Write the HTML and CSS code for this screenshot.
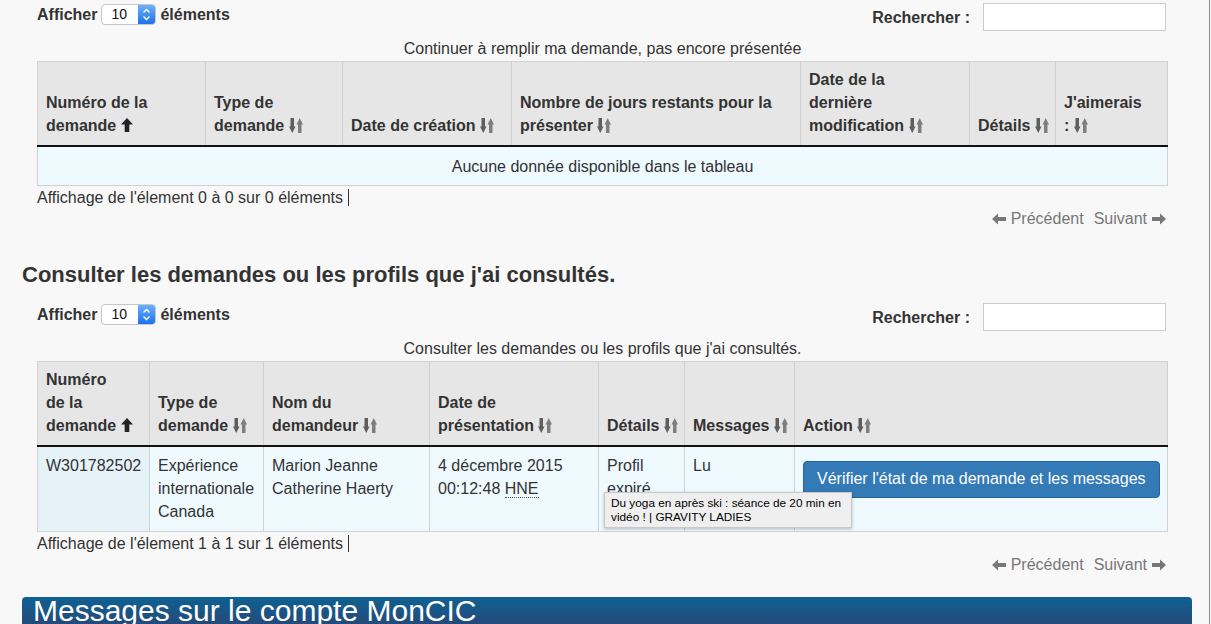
FILE: index.html
```html
<!DOCTYPE html>
<html lang="fr">
<head>
<meta charset="utf-8">
<title>Mes demandes</title>
<link rel="stylesheet" href="styles.css">
</head>
<body>
<div class="page">
  <div class="container">

    <div class="dt">
      <div class="dt-top">
        <div class="dt-length">Afficher
          <span class="select"><span class="select-val">10</span><span class="select-btn"><svg width="17" height="19" viewBox="0 0 17 19"><path d="M5.5 7.5L8.5 4.5L11.5 7.5M5.5 11.5L8.5 14.5L11.5 11.5" fill="none" stroke="#fff" stroke-width="1.4"/></svg></span></span>
          éléments</div>
        <div class="dt-filter">Rechercher : <span class="search"></span></div>
      </div>
      <table>
        <caption>Continuer à remplir ma demande, pas encore présentée</caption>
        <colgroup><col class="w168"><col class="w137"><col class="w169"><col class="w289"><col class="w169"><col class="w86"><col class="w112"></colgroup>
        <thead>
          <tr>
            <th>Numéro de la<br>demande <svg class="ico-up" width="12" height="14" viewBox="0 0 12 14"><path d="M6 0L12 6.5H8.3V14H3.7V6.5H0Z"/></svg></th>
            <th>Type de<br>demande <svg class="ico-sort" width="14" height="15" viewBox="0 0 14 15"><path class="d" d="M1.5 0H5V8.5H6.5L3.25 15L0 8.5H1.5Z"/><path class="u" d="M10.75 0L14 6.5H12.5V15H9V6.5H7.5Z"/></svg></th>
            <th>Date de création <svg class="ico-sort" width="14" height="15" viewBox="0 0 14 15"><path class="d" d="M1.5 0H5V8.5H6.5L3.25 15L0 8.5H1.5Z"/><path class="u" d="M10.75 0L14 6.5H12.5V15H9V6.5H7.5Z"/></svg></th>
            <th>Nombre de jours restants pour la<br>présenter <svg class="ico-sort" width="14" height="15" viewBox="0 0 14 15"><path class="d" d="M1.5 0H5V8.5H6.5L3.25 15L0 8.5H1.5Z"/><path class="u" d="M10.75 0L14 6.5H12.5V15H9V6.5H7.5Z"/></svg></th>
            <th>Date de la<br>dernière<br>modification <svg class="ico-sort" width="14" height="15" viewBox="0 0 14 15"><path class="d" d="M1.5 0H5V8.5H6.5L3.25 15L0 8.5H1.5Z"/><path class="u" d="M10.75 0L14 6.5H12.5V15H9V6.5H7.5Z"/></svg></th>
            <th>Détails <svg class="ico-sort" width="14" height="15" viewBox="0 0 14 15"><path class="d" d="M1.5 0H5V8.5H6.5L3.25 15L0 8.5H1.5Z"/><path class="u" d="M10.75 0L14 6.5H12.5V15H9V6.5H7.5Z"/></svg></th>
            <th>J'aimerais<br>: <svg class="ico-sort" width="14" height="15" viewBox="0 0 14 15"><path class="d" d="M1.5 0H5V8.5H6.5L3.25 15L0 8.5H1.5Z"/><path class="u" d="M10.75 0L14 6.5H12.5V15H9V6.5H7.5Z"/></svg></th>
          </tr>
        </thead>
        <tbody>
          <tr><td class="empty" colspan="7">Aucune donnée disponible dans le tableau</td></tr>
        </tbody>
      </table>
      <div class="info">Affichage de l'élement 0 à 0 sur 0 éléments <span class="bar"></span></div>
      <div class="pager">
        <span class="pg"><svg class="ico-arrow" width="14" height="12" viewBox="0 0 14 12"><path d="M0 6L6 0.5V4H14V8H6V11.5Z"/></svg>Précédent</span>
        <span class="pg">Suivant<svg class="ico-arrow" width="14" height="12" viewBox="0 0 14 12"><path d="M14 6L8 0.5V4H0V8H8V11.5Z"/></svg></span>
      </div>
    </div>

    <h2 class="section-title">Consulter les demandes ou les profils que j'ai consultés.</h2>

    <div class="dt">
      <div class="dt-top">
        <div class="dt-length">Afficher
          <span class="select"><span class="select-val">10</span><span class="select-btn"><svg width="17" height="19" viewBox="0 0 17 19"><path d="M5.5 7.5L8.5 4.5L11.5 7.5M5.5 11.5L8.5 14.5L11.5 11.5" fill="none" stroke="#fff" stroke-width="1.4"/></svg></span></span>
          éléments</div>
        <div class="dt-filter">Rechercher : <span class="search"></span></div>
      </div>
      <table>
        <caption>Consulter les demandes ou les profils que j'ai consultés.</caption>
        <colgroup><col class="w112"><col class="w114"><col class="w166"><col class="w169"><col class="w86"><col class="w110"><col class="w373"></colgroup>
        <thead>
          <tr>
            <th>Numéro<br>de la<br>demande <svg class="ico-up" width="12" height="14" viewBox="0 0 12 14"><path d="M6 0L12 6.5H8.3V14H3.7V6.5H0Z"/></svg></th>
            <th>Type de<br>demande <svg class="ico-sort" width="14" height="15" viewBox="0 0 14 15"><path class="d" d="M1.5 0H5V8.5H6.5L3.25 15L0 8.5H1.5Z"/><path class="u" d="M10.75 0L14 6.5H12.5V15H9V6.5H7.5Z"/></svg></th>
            <th>Nom du<br>demandeur <svg class="ico-sort" width="14" height="15" viewBox="0 0 14 15"><path class="d" d="M1.5 0H5V8.5H6.5L3.25 15L0 8.5H1.5Z"/><path class="u" d="M10.75 0L14 6.5H12.5V15H9V6.5H7.5Z"/></svg></th>
            <th>Date de<br>présentation <svg class="ico-sort" width="14" height="15" viewBox="0 0 14 15"><path class="d" d="M1.5 0H5V8.5H6.5L3.25 15L0 8.5H1.5Z"/><path class="u" d="M10.75 0L14 6.5H12.5V15H9V6.5H7.5Z"/></svg></th>
            <th>Détails <svg class="ico-sort" width="14" height="15" viewBox="0 0 14 15"><path class="d" d="M1.5 0H5V8.5H6.5L3.25 15L0 8.5H1.5Z"/><path class="u" d="M10.75 0L14 6.5H12.5V15H9V6.5H7.5Z"/></svg></th>
            <th>Messages <svg class="ico-sort" width="14" height="15" viewBox="0 0 14 15"><path class="d" d="M1.5 0H5V8.5H6.5L3.25 15L0 8.5H1.5Z"/><path class="u" d="M10.75 0L14 6.5H12.5V15H9V6.5H7.5Z"/></svg></th>
            <th>Action <svg class="ico-sort" width="14" height="15" viewBox="0 0 14 15"><path class="d" d="M1.5 0H5V8.5H6.5L3.25 15L0 8.5H1.5Z"/><path class="u" d="M10.75 0L14 6.5H12.5V15H9V6.5H7.5Z"/></svg></th>
          </tr>
        </thead>
        <tbody>
          <tr>
            <td class="sorted">W301782502</td>
            <td>Expérience internationale Canada</td>
            <td>Marion Jeanne Catherine Haerty</td>
            <td>4 décembre 2015 00:12:48 <abbr class="tz" title="Heure normale de l'Est">HNE</abbr></td>
            <td class="details">Profil expiré
              <div class="tip">Du yoga en après ski : séance de 20 min en<br>vidéo ! | GRAVITY LADIES</div>
            </td>
            <td>Lu</td>
            <td><span class="btn">Vérifier l'état de ma demande et les messages</span></td>
          </tr>
        </tbody>
      </table>
      <div class="info">Affichage de l'élement 1 à 1 sur 1 éléments <span class="bar"></span></div>
      <div class="pager">
        <span class="pg"><svg class="ico-arrow" width="14" height="12" viewBox="0 0 14 12"><path d="M0 6L6 0.5V4H14V8H6V11.5Z"/></svg>Précédent</span>
        <span class="pg">Suivant<svg class="ico-arrow" width="14" height="12" viewBox="0 0 14 12"><path d="M14 6L8 0.5V4H0V8H8V11.5Z"/></svg></span>
      </div>
    </div>

    <div class="banner">Messages sur le compte MonCIC</div>
  </div>
</div>
</body>
</html>
```

FILE: styles.css
```css
* { box-sizing: border-box; }

html, body {
  margin: 0;
  background: #f8f8f8;
}

body {
  font-family: "Liberation Sans", Arial, sans-serif;
  font-size: 16px;
  line-height: 23px;
  color: #333;
}

.page {
  width: 1210px;
  min-height: 624px;
  border-right: 1px solid #8c8c8c;
}

.container {
  margin-left: 22px;
  width: 1170px;
}

.dt {
  margin-left: 15px;
  width: 1130px;
}

.dt-top {
  display: flex;
  justify-content: space-between;
  align-items: flex-start;
  height: 37px;
}

.dt-length {
  display: flex;
  align-items: center;
  gap: 4px;
  margin-top: 3px;
  height: 23px;
  font-weight: bold;
}

.select {
  display: inline-flex;
  width: 55px;
  height: 21px;
  border: 1px solid #c6c6c6;
  border-radius: 4px;
  background: #fff;
  overflow: hidden;
  font-weight: normal;
  font-size: 14px;
  color: #111;
}

.select-val {
  flex: 1;
  padding-left: 9px;
  line-height: 19px;
}

.select-btn {
  width: 17px;
  display: flex;
  align-items: center;
  justify-content: center;
  background: linear-gradient(#6cb0fb, #1a72ea);
}

.dt-filter {
  display: flex;
  align-items: center;
  gap: 13px;
  margin-top: 3px;
  margin-right: 1px;
  font-weight: bold;
}

.search {
  display: block;
  width: 183px;
  height: 28px;
  background: #fff;
  border: 1px solid #cccccc;
}

table {
  width: 1130px;
  table-layout: fixed;
  border-collapse: collapse;
  border: 1px solid #d2d2d2;
}

caption {
  line-height: 23px;
  padding-bottom: 1px;
  text-align: center;
}

.w86 { width: 86px; }
.w110 { width: 110px; }
.w112 { width: 112px; }
.w114 { width: 114px; }
.w137 { width: 137px; }
.w166 { width: 166px; }
.w168 { width: 168px; }
.w169 { width: 169px; }
.w289 { width: 289px; }
.w373 { width: 373px; }

th {
  background: #e6e6e6;
  text-align: left;
  vertical-align: bottom;
  padding: 6px 8px 8px;
  border-left: 1px solid #d2d2d2;
  border-bottom: 2px solid #111;
  white-space: nowrap;
  font-weight: bold;
  color: #333;
}

td {
  background: #eefaff;
  vertical-align: top;
  padding: 7px 8px 8px;
  border-left: 1px solid #d2d2d2;
}

td.sorted { background: #e5f2f8; }

td.empty { text-align: center; padding: 8px 8px 7px; }

td.details { position: relative; }

.ico-sort { vertical-align: -2px; }
.ico-sort .d { fill: #5e5e5e; }
.ico-sort .u { fill: #7e7e7e; }

.ico-up { vertical-align: -1px; fill: #222; }

.tz {
  text-decoration: none;
  border-bottom: 1px dotted #555;
}

.tip {
  position: absolute;
  left: 5px;
  top: 45px;
  width: 248px;
  padding: 3px 6px;
  background: #efefef;
  border: 1px solid #c9c9c9;
  box-shadow: 0 1px 3px rgba(0, 0, 0, 0.25);
  font-size: 11.8px;
  line-height: 14px;
  color: #000;
  white-space: nowrap;
  z-index: 2;
}

.btn {
  display: inline-block;
  margin-top: 7px;
  padding: 6px 13px 7px;
  line-height: 22px;
  white-space: nowrap;
  background: #337ab7;
  border: 1px solid #2a6496;
  border-radius: 4px;
  color: #fff;
}

.info {
  display: flex;
  align-items: center;
  gap: 5px;
  line-height: 23px;
}

.bar {
  display: inline-block;
  height: 17px;
  border-left: 1px solid #333;
}

.pager {
  display: flex;
  justify-content: flex-end;
  gap: 10px;
  margin-top: -2px;
  padding-right: 1px;
  color: #777;
}

.pg {
  display: inline-flex;
  align-items: center;
  gap: 5px;
}

.ico-arrow { fill: #777; }

.section-title {
  margin: 33px 0 13px;
  font-size: 22px;
  line-height: 24px;
  font-weight: bold;
  color: #333;
}

.banner {
  margin-top: 21px;
  height: 45px;
  padding-left: 11px;
  border-radius: 4px 4px 0 0;
  background: linear-gradient(to bottom, #0e6192 0, #244a7a 27px, #2a4270 45px);
  color: #fff;
  font-size: 30px;
  line-height: 28px;
}
```
